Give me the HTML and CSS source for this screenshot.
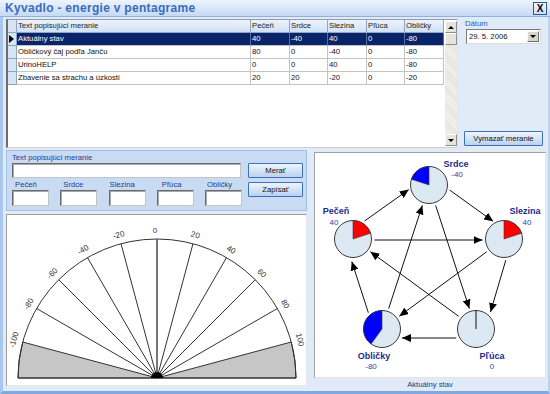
FILE: index.html
```html
<!DOCTYPE html>
<html>
<head>
<meta charset="utf-8">
<link rel="stylesheet" href="styles.css">
</head>
<body>
<div class="window">
  <div class="titlebar">
    <span class="title">Kyvadlo - energie v pentagrame</span>
    <span class="close">X</span>
  </div>
  <div class="frame">
    <div class="top">
      <div class="grid">
        <div class="table">
          <div class="row head">
            <div class="cell rh"></div>
            <div class="cell">Text popisujúci meranie</div>
            <div class="cell">Pečeň</div>
            <div class="cell">Srdce</div>
            <div class="cell">Slezina</div>
            <div class="cell">Pľúca</div>
            <div class="cell">Obličky</div>
          </div>
          <div class="row sel">
            <div class="cell rh"><span class="ptr"></span></div>
            <div class="cell">Aktuálny stav</div>
            <div class="cell">40</div>
            <div class="cell">-40</div>
            <div class="cell">40</div>
            <div class="cell">0</div>
            <div class="cell">-80</div>
          </div>
          <div class="row">
            <div class="cell rh"></div>
            <div class="cell">Obličkový čaj podľa Janču</div>
            <div class="cell">80</div>
            <div class="cell">0</div>
            <div class="cell">-40</div>
            <div class="cell">0</div>
            <div class="cell">-80</div>
          </div>
          <div class="row">
            <div class="cell rh"></div>
            <div class="cell">UrinoHELP</div>
            <div class="cell">0</div>
            <div class="cell">0</div>
            <div class="cell">40</div>
            <div class="cell">0</div>
            <div class="cell">-80</div>
          </div>
          <div class="row">
            <div class="cell rh"></div>
            <div class="cell">Zbavenie sa strachu a úzkosti</div>
            <div class="cell">20</div>
            <div class="cell">20</div>
            <div class="cell">-20</div>
            <div class="cell">0</div>
            <div class="cell">-20</div>
          </div>
        </div>
        <div class="vscroll">
          <div class="sb-btn"><span class="tri-up"></span></div>
          <div class="sb-thumb"></div>
          <div class="sb-track"></div>
          <div class="sb-btn"><span class="tri-down"></span></div>
        </div>
      </div>
      <div class="side">
        <div class="date-label">Dátum</div>
        <div class="combo">
          <span class="combo-val">29. 5. 2006</span>
          <span class="combo-btn"><span class="tri-down"></span></span>
        </div>
        <div class="btn wide">Vymazať meranie</div>
      </div>
    </div>
    <div class="bottom">
      <div class="leftcol">
        <div class="form">
          <div class="form-main">
            <div class="flabel">Text popisujúci meranie</div>
            <div class="input text"></div>
            <div class="fields">
              <div class="field"><div class="flabel l1">Pečeň</div><div class="input small"></div></div>
              <div class="field"><div class="flabel l2">Srdce</div><div class="input small"></div></div>
              <div class="field"><div class="flabel l3">Slezina</div><div class="input small"></div></div>
              <div class="field"><div class="flabel l4">Pľúca</div><div class="input small"></div></div>
              <div class="field"><div class="flabel l5">Obličky</div><div class="input small"></div></div>
            </div>
          </div>
          <div class="form-btns">
            <div class="btn">Merať</div>
            <div class="btn">Zapísať</div>
          </div>
        </div>
        <div class="gauge">
          <svg width="299" height="170" viewBox="0 0 299 170">
            <path class="gray" d="M150,163 L15.74,127.02 A139,139 0 0 0 11,163 Z"/>
            <path class="gray" d="M150,163 L284.26,127.02 A139,139 0 0 1 289,163 Z"/>
            <path class="arc" d="M11,163 A139,139 0 0 1 289,163 Z"/>
            <g class="ticks">
              <line x1="150" y1="163" x2="29.63" y2="93.5"/>
              <line x1="150" y1="163" x2="51.71" y2="64.71"/>
              <line x1="150" y1="163" x2="80.5" y2="42.63"/>
              <line x1="150" y1="163" x2="114.03" y2="28.74"/>
              <line x1="150" y1="163" x2="185.97" y2="28.74"/>
              <line x1="150" y1="163" x2="219.5" y2="42.63"/>
              <line x1="150" y1="163" x2="248.29" y2="64.71"/>
              <line x1="150" y1="163" x2="270.37" y2="93.5"/>
            </g>
            <line class="zero" x1="150" y1="163" x2="150" y2="24"/>
            <path d="M144,163 A6,6 0 0 1 156,163 Z" fill="#000"/>
            <g class="glabels">
              <text x="150" y="17.5" transform="rotate(-75 150 163)">-100</text>
              <text x="150" y="17.5" transform="rotate(-60 150 163)">-80</text>
              <text x="150" y="17.5" transform="rotate(-45 150 163)">-60</text>
              <text x="150" y="17.5" transform="rotate(-30 150 163)">-40</text>
              <text x="150" y="17.5" transform="rotate(-15 150 163)">-20</text>
              <text x="148" y="17.5">0</text>
              <text x="150" y="17.5" transform="rotate(15 150 163)">20</text>
              <text x="150" y="17.5" transform="rotate(30 150 163)">40</text>
              <text x="150" y="17.5" transform="rotate(45 150 163)">60</text>
              <text x="150" y="17.5" transform="rotate(60 150 163)">80</text>
              <text x="150" y="17.5" transform="rotate(75 150 163)">100</text>
            </g>
          </svg>
        </div>
      </div>
      <div class="rightcol">
        <div class="penta">
          <svg width="230" height="224" viewBox="0 0 230 224">
            <defs>
              <marker id="ah" markerUnits="userSpaceOnUse" markerWidth="9" markerHeight="8" refX="9" refY="4" orient="auto">
                <path d="M0,0 L9,4 L0,8 Z" fill="#000"/>
              </marker>
            </defs>
            <g class="edges">
              <line x1="49.43" y1="68.07" x2="93.72" y2="36.6"/>
              <line x1="134.66" y1="37.02" x2="178.09" y2="68.29"/>
              <line x1="190.79" y1="107.19" x2="175.5" y2="159"/>
              <line x1="141.3" y1="185" x2="87" y2="185"/>
              <line x1="53.35" y1="159.7" x2="36.8" y2="108.5"/>
              <line x1="59.5" y1="87" x2="167.5" y2="87"/>
              <line x1="120.67" y1="52.44" x2="154.33" y2="155.56"/>
              <line x1="171.7" y1="98.76" x2="84.31" y2="163.24"/>
              <line x1="143.65" y1="163.3" x2="55.36" y2="98.7"/>
              <line x1="73.67" y1="155.56" x2="107.33" y2="52.44"/>
            </g>
            <g class="nodes">
              <circle cx="114" cy="32" r="18.5"/>
              <circle cx="38" cy="86" r="18.5"/>
              <circle cx="189" cy="86" r="18.5"/>
              <circle cx="67" cy="176" r="18.5"/>
              <circle cx="161" cy="176" r="18.5"/>
            </g>
            <path class="red" d="M38,86 L38,67.5 A18.5,18.5 0 0 1 55.59,80.28 Z"/>
            <path class="red" d="M189,86 L189,67.5 A18.5,18.5 0 0 1 206.59,80.28 Z"/>
            <path class="blue" d="M114,32 L114,13.5 A18.5,18.5 0 0 0 96.41,26.28 Z"/>
            <path class="blue" d="M67,176 L67,157.5 A18.5,18.5 0 0 0 56.13,190.97 Z"/>
            <line class="needle" x1="161" y1="176" x2="161" y2="157.5"/>
            <g class="nlabel">
              <text x="141" y="14">Srdce</text>
              <text x="21" y="61">Pečeň</text>
              <text x="210" y="61">Slezina</text>
              <text x="59" y="206">Obličky</text>
              <text x="177" y="206">Pľúca</text>
            </g>
            <g class="nvalue">
              <text x="142" y="24">-40</text>
              <text x="19" y="72">40</text>
              <text x="212" y="72">40</text>
              <text x="56" y="216">-80</text>
              <text x="177" y="216">0</text>
            </g>
          </svg>
        </div>
        <div class="caption">Aktuálny stav</div>
      </div>
    </div>
  </div>
</div>
</body>
</html>
```

FILE: styles.css
```css
* { box-sizing: border-box; }
html, body { margin: 0; padding: 0; }
body {
  width: 550px;
  height: 394px;
  overflow: hidden;
  font-family: "Liberation Sans", Arial, sans-serif;
  font-size: 7.7px;
  color: #000;
  background: #e1ebf8;
}
.window {
  width: 550px;
  height: 394px;
  display: flex;
  flex-direction: column;
}
.titlebar {
  height: 17px;
  flex: none;
  display: flex;
  align-items: center;
  justify-content: space-between;
  padding: 0 3px 0 5px;
  background: linear-gradient(#edf4fd, #c6daf4);
  border-bottom: 1px solid #8db1e2;
}
.title {
  font-weight: bold;
  font-size: 12px;
  letter-spacing: 0.3px;
  color: #3a6cbd;
}
.close {
  width: 14px;
  height: 13px;
  border: 1px solid #2f5795;
  background: linear-gradient(#f5f8fd, #cddcf1);
  font-weight: bold;
  font-size: 10px;
  display: flex;
  align-items: center;
  justify-content: center;
  color: #000;
}
.frame {
  flex: 1;
  display: flex;
  flex-direction: column;
  border-left: 3px solid #a9c7ee;
  border-right: 2px solid #bcd4f2;
  border-bottom: 3px solid #7fa8e3;
  padding: 2px 0 0 3px;
  background: #e1ebf8;
}
.top {
  display: flex;
  height: 129px;
  flex: none;
}
.grid {
  width: 452px;
  height: 129px;
  background: #fff;
  border-top: 1px solid #9a9a9a;
  border-left: 2px solid #6e6e6e;
  border-bottom: 1px solid #cfcfcf;
  border-right: 1px solid #e4e4e4;
  display: flex;
  gap: 1px;
}
.table { width: 436px; }
.row {
  display: grid;
  grid-template-columns: 9px 234px 39px 38px 39px 38px 39px;
  height: 13px;
}
.cell {
  border-right: 1px solid #c4c4c4;
  border-bottom: 1px solid #c4c4c4;
  padding-left: 1px;
  line-height: 12px;
  white-space: nowrap;
  overflow: hidden;
  color: #111;
}
.head .cell {
  background: linear-gradient(#ebf3fc, #d0e1f6);
  border-color: #8ea5c4;
  color: #222;
}
.cell.rh {
  background: #d6e4f5;
  border-color: #8ea5c4;
  padding: 0;
  display: flex;
  align-items: center;
}
.sel .cell { background: #0a246a; color: #fff; border-right-color: #5a6c9c; border-bottom-color: #c4c4c4; }
.sel .cell.rh { background: #d6e4f5; border-color: #8ea5c4; }
.ptr {
  width: 0;
  height: 0;
  margin-left: 1px;
  border-left: 5px solid #000;
  border-top: 4px solid transparent;
  border-bottom: 4px solid transparent;
}
.vscroll {
  width: 12px;
  margin-top: 1px;
  margin-bottom: 1px;
  display: flex;
  flex-direction: column;
  background: #eceae4;
}
.sb-btn, .sb-thumb {
  height: 12px;
  flex: none;
  background: #e6e3da;
  border: 1px solid;
  border-color: #fbfbfb #8c8c8c #8c8c8c #fbfbfb;
  display: flex;
  align-items: center;
  justify-content: center;
}
.sb-track { flex: 1; background: repeating-linear-gradient(45deg, #f4f3ef 0 1px, #e4e2dc 1px 2px); }
.tri-up {
  width: 0; height: 0;
  border-left: 3px solid transparent;
  border-right: 3px solid transparent;
  border-bottom: 3px solid #000;
}
.tri-down {
  width: 0; height: 0;
  border-left: 3px solid transparent;
  border-right: 3px solid transparent;
  border-top: 3px solid #000;
}
.side {
  margin-left: 6px;
  width: 81px;
  display: flex;
  flex-direction: column;
}
.date-label {
  line-height: 10px;
  padding-left: 1px;
  color: #2a55bd;
}
.combo {
  margin-left: 2px;
  width: 75px;
  height: 15px;
  background: #fff;
  border: 1px solid;
  border-color: #7a7a7a #dcdcdc #dcdcdc #7a7a7a;
  display: flex;
  align-items: center;
  justify-content: space-between;
  padding: 1px 1px 1px 2px;
}
.combo-val { color: #111; }
.combo-btn {
  width: 12px;
  height: 11px;
  background: #d8d5cc;
  border: 1px solid;
  border-color: #fbfbfb #6f6f6f #6f6f6f #fbfbfb;
  display: flex;
  align-items: center;
  justify-content: center;
}
.btn {
  height: 15px;
  border: 1px solid #3d70b4;
  border-radius: 1px;
  background: linear-gradient(#eef5fd, #b9d2f1);
  display: flex;
  align-items: center;
  justify-content: center;
  color: #111;
}
.btn.wide {
  width: 79px;
  margin-top: auto;
  margin-bottom: 2px;
}
.bottom {
  display: flex;
  margin-top: 2px;
  flex: 1;
}
.leftcol {
  width: 301px;
  display: flex;
  flex-direction: column;
  gap: 3px;
}
.form {
  height: 61px;
  border: 1px solid #a4c0e6;
  background: #c8dbf3;
  padding: 2px 0 0 5px;
  display: flex;
  gap: 6px;
}
.form-main { width: 230px; }
.flabel {
  line-height: 10px;
  color: #1f3b8e;
  white-space: nowrap;
}
.input {
  background: #fff;
  border: 1px solid;
  border-color: #6a6a6a #c4c4c4 #c4c4c4 #6a6a6a;
  box-shadow: inset 1px 1px 0 #a8a8a8;
}
.input.text { width: 229px; height: 15px; margin-bottom: 2px; }
.fields {
  display: grid;
  grid-template-columns: repeat(5, 37px);
  justify-content: space-between;
}
.input.small { width: 37px; height: 16px; }
.l1 { padding-left: 3px; }
.l2 { padding-left: 3px; }
.l3 { padding-left: 1px; }
.l4 { padding-left: 5px; }
.l5 { padding-left: 2px; }
.form-btns {
  width: 55px;
  padding-top: 10px;
  display: flex;
  flex-direction: column;
  gap: 4px;
}
.gauge {
  height: 172px;
  background: #fff;
  border: 1px solid;
  border-color: #9c9c9c #e8e8e8 #e8e8e8 #9c9c9c;
}
.gauge svg { display: block; }
.gray { fill: #c6c6c6; stroke: #333; stroke-width: 1; }
.arc { fill: none; stroke: #333; stroke-width: 1; }
.ticks line { stroke: #333; stroke-width: 1; }
.zero { stroke: #555; stroke-width: 1.6; }
.glabels text {
  font-family: "Liberation Sans", Arial, sans-serif;
  font-size: 8px;
  fill: #333;
  text-anchor: middle;
}
.rightcol {
  margin-left: 7px;
  width: 232px;
  padding-top: 2px;
  display: flex;
  flex-direction: column;
}
.penta {
  height: 226px;
  background: #fff;
  border: 1px solid;
  border-color: #a0a0a0 #e4e4e4 #e4e4e4 #a0a0a0;
}
.penta svg { display: block; }
.edges line { stroke: #111; stroke-width: 1; marker-end: url(#ah); }
.nodes circle { fill: #dce8f2; stroke: #3a3a3a; stroke-width: 1; }
.red { fill: #ff0000; stroke: #3a3a3a; stroke-width: 0.6; }
.blue { fill: #0000ff; stroke: #3a3a3a; stroke-width: 0.6; }
.needle { stroke: #111; stroke-width: 1; }
.nlabel text {
  font-family: "Liberation Sans", Arial, sans-serif;
  font-weight: bold;
  font-size: 9px;
  fill: #1b2c8a;
  text-anchor: middle;
}
.nvalue text {
  font-family: "Liberation Sans", Arial, sans-serif;
  font-size: 8px;
  fill: #2447b0;
  text-anchor: middle;
}
.caption {
  text-align: center;
  line-height: 12px;
  padding-top: 1px;
  color: #233a78;
}
```
